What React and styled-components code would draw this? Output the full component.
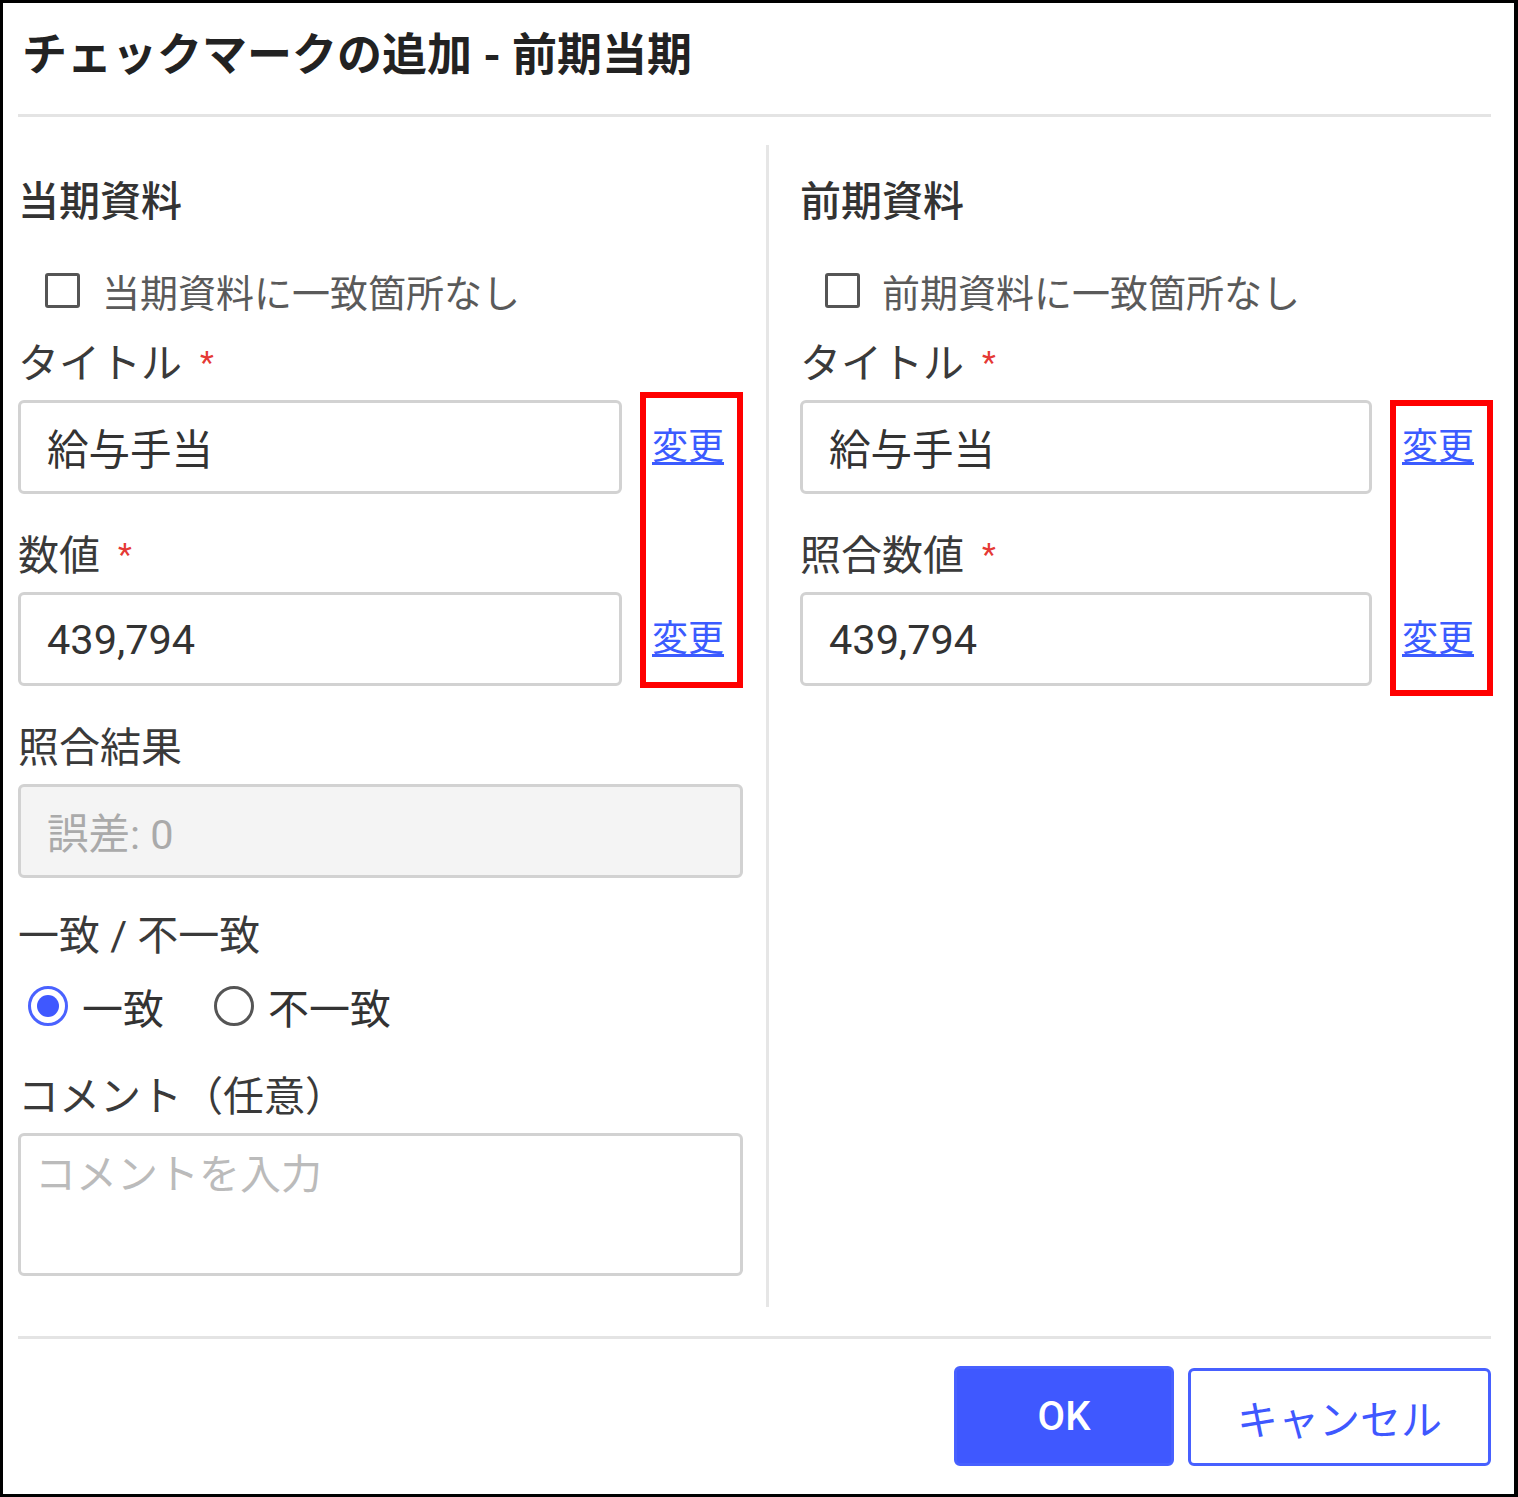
import React, { useState } from "react";
import styled, { createGlobalStyle } from "styled-components";

const GlobalStyle = createGlobalStyle`
  body {
    margin: 0;
    background: #fff;
  }
  * {
    box-sizing: border-box;
  }
`;

const Page = styled.div`
  width: 1518px;
  height: 1497px;
  border: 3px solid #000;
  border-right-width: 4px;
  display: flex;
  flex-direction: column;
  background: #fff;
  font-family: Roboto, "Noto Sans CJK JP", sans-serif;
  color: #333;
`;

const Header = styled.div`
  height: 111px;
  padding: 0 0 14px 19px;
  display: flex;
  align-items: center;
  font-size: 45px;
  font-weight: 700;
  color: #222;
`;

const Rule = styled.div`
  height: 3px;
  flex-shrink: 0;
  background: #e4e4e4;
  margin: 0 23px 0 15px;
`;

const Body = styled.div`
  flex: 1;
  display: flex;
  padding: 28px 0 29px 15px;
`;

const Column = styled.div`
  width: ${(p) => p.width}px;
  display: flex;
  flex-direction: column;
`;

const Divider = styled.div`
  width: 3px;
  background: #e6e6e6;
  margin: 0 31px 0 23px;
`;

const SectionTitle = styled.div`
  margin-top: 33px;
  font-size: 41px;
  line-height: 48px;
  font-weight: 500;
  color: #333;
`;

const CheckRow = styled.label`
  margin-top: 40px;
  display: flex;
  align-items: center;
  gap: 22px;
  padding-left: ${(p) => p.indent}px;
  height: 48px;
  font-size: 38px;
  color: #5a5a5a;
`;

const Box = styled.span`
  width: 35px;
  height: 35px;
  border: 3px solid #555;
  border-radius: 3px;
  background: ${(p) => (p.checked ? "#4058ff" : "#fff")};
`;

const FieldGrid = styled.div`
  margin-top: 26px;
  display: grid;
  grid-template-columns: 1fr 103px;
  column-gap: 18px;
`;

const Label = styled.div`
  font-size: 41px;
  line-height: 48px;
  color: #3a3a3a;
  display: flex;
  align-items: flex-start;
  margin-top: ${(p) => p.top || 0}px;
  margin-bottom: ${(p) => (p.bottom === undefined ? 12 : p.bottom)}px;
`;

const Required = styled.span`
  color: #e53935;
  font-size: 32px;
  line-height: 32px;
  margin-left: 18px;
  margin-top: 6px;
`;

const Input = styled.div`
  height: 94px;
  border: 3px solid #d2d2d2;
  border-radius: 6px;
  padding-left: 26px;
  display: flex;
  align-items: center;
  font-size: 41.5px;
  color: ${(p) => (p.disabled ? "#aaa" : "#333")};
  background: ${(p) => (p.disabled ? "#f4f4f4" : "#fff")};
`;

const LinkBox = styled.div`
  grid-column: 2;
  grid-row: 2 / 5;
  border: 6px solid #ff0000;
  margin-top: ${(p) => p.shift}px;
  margin-bottom: ${(p) => -10 - p.shift}px;
  padding: ${(p) => 19 - p.shift}px 0 ${(p) => 29 + p.shift}px 6px;
  display: flex;
  flex-direction: column;
  justify-content: space-between;
`;

const ChangeLink = styled.a`
  font-size: 36px;
  line-height: 44px;
  color: #3b5bff;
  text-decoration: underline;
  text-underline-offset: 3px;
  cursor: pointer;
`;

const Group = styled.div`
  margin-top: ${(p) => p.top}px;
  display: flex;
  flex-direction: column;
`;

const RadioRow = styled.div`
  display: flex;
  align-items: center;
  height: 48px;
  padding-left: 10px;
  gap: 50px;
`;

const RadioOption = styled.label`
  display: flex;
  align-items: center;
  gap: 14px;
  font-size: 41px;
  color: #333;
  cursor: pointer;
`;

const RadioCircle = styled.span`
  width: 40px;
  height: 40px;
  border-radius: 50%;
  border: 3px solid ${(p) => (p.checked ? "#4a62ff" : "#555")};
  display: flex;
  align-items: center;
  justify-content: center;

  &::after {
    content: "";
    width: 22px;
    height: 22px;
    border-radius: 50%;
    background: ${(p) => (p.checked ? "#3f58ff" : "transparent")};
  }
`;

const TextArea = styled.div`
  height: 143px;
  border: 3px solid #d2d2d2;
  border-radius: 6px;
  padding: 15px 14px;
  font-size: 41px;
  line-height: 48px;
  color: #bbb;
`;

const Footer = styled.div`
  height: 155px;
  flex-shrink: 0;
  display: flex;
  justify-content: flex-end;
  align-items: flex-start;
  gap: 14px;
  padding: 27px 23px 0 0;
`;

const Button = styled.button`
  height: ${(p) => (p.primary ? 100 : 98)}px;
  width: ${(p) => (p.primary ? 220 : 303)}px;
  margin-top: ${(p) => (p.primary ? 0 : 2)}px;
  border-radius: 6px;
  border: 3px solid #4760ff;
  background: ${(p) => (p.primary ? "#3f58ff" : "#fff")};
  color: ${(p) => (p.primary ? "#fff" : "#3f58ff")};
  font-family: Roboto, "Noto Sans CJK JP", sans-serif;
  font-size: ${(p) => (p.primary ? 40 : 41)}px;
  font-weight: ${(p) => (p.primary ? 500 : 400)};
  cursor: pointer;
`;

const Fields = ({ titleLabel, valueLabel, shift }) => (
  <FieldGrid>
    <Label>
      {titleLabel}
      <Required>*</Required>
    </Label>
    <div />
    <Input>給与手当</Input>
    <LinkBox shift={shift}>
      <ChangeLink>変更</ChangeLink>
      <ChangeLink>変更</ChangeLink>
    </LinkBox>
    <Label top={38}>
      {valueLabel}
      <Required>*</Required>
    </Label>
    <Input>439,794</Input>
  </FieldGrid>
);

const App = () => {
  const [match, setMatch] = useState("match");

  return (
    <Page>
      <GlobalStyle />
      <Header>チェックマークの追加 - 前期当期</Header>
      <Rule />
      <Body>
        <Column width={725}>
          <SectionTitle>当期資料</SectionTitle>
          <CheckRow indent={27}>
            <Box />
            当期資料に一致箇所なし
          </CheckRow>
          <Fields titleLabel="タイトル" valueLabel="数値" shift={-8} />
          <Group top={38}>
            <Label>照合結果</Label>
            <Input disabled>誤差: 0</Input>
          </Group>
          <Group top={34}>
            <Label bottom={22}>一致 / 不一致</Label>
            <RadioRow>
              <RadioOption onClick={() => setMatch("match")}>
                <RadioCircle checked={match === "match"} />
                一致
              </RadioOption>
              <RadioOption onClick={() => setMatch("mismatch")}>
                <RadioCircle checked={match === "mismatch"} />
                不一致
              </RadioOption>
            </RadioRow>
          </Group>
          <Group top={43}>
            <Label>コメント（任意）</Label>
            <TextArea>コメントを入力</TextArea>
          </Group>
        </Column>
        <Divider />
        <Column width={693}>
          <SectionTitle>前期資料</SectionTitle>
          <CheckRow indent={25}>
            <Box />
            前期資料に一致箇所なし
          </CheckRow>
          <Fields titleLabel="タイトル" valueLabel="照合数値" shift={0} />
        </Column>
      </Body>
      <Rule />
      <Footer>
        <Button primary>OK</Button>
        <Button>キャンセル</Button>
      </Footer>
    </Page>
  );
};

export default App;
